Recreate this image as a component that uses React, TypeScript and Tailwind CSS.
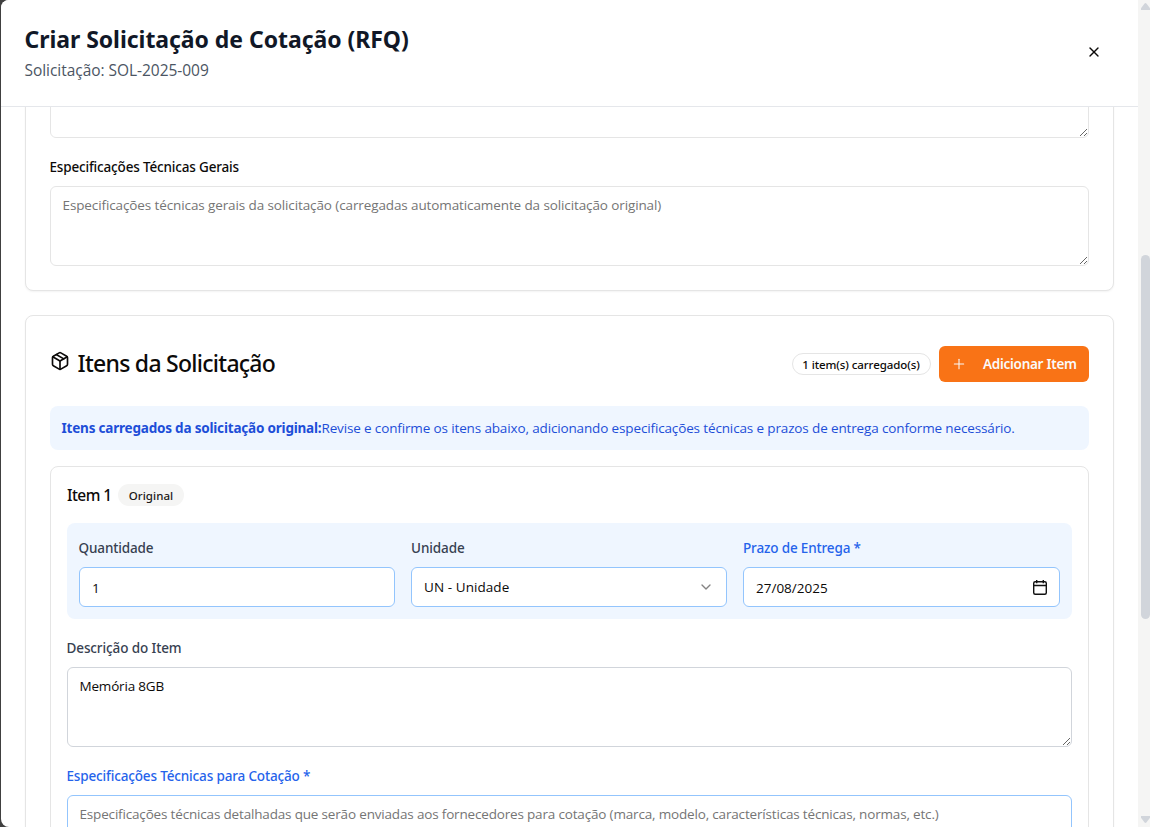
import { ReactNode } from "react";
import { ChevronDown, Package, Plus, X } from "lucide-react";

const TEXTAREA =
  "block h-20 w-full resize rounded-md border bg-white py-2 pr-3 pl-[11.5px] font-['Open_Sans',sans-serif] text-[13.5px] leading-5 text-[#0c0a09] placeholder:text-[#757575] outline-none";

function Label({ className, children }: { className: string; children: ReactNode }) {
  return <label className={`block text-[13.5px] leading-[14px] font-medium ${className}`}>{children}</label>;
}

function CalendarIcon() {
  return (
    <svg className="-mr-px" width="16" height="17" viewBox="0 0 16 17" fill="none" stroke="#111" strokeWidth="1.4">
      <rect x="1.7" y="2.7" width="12.6" height="12.6" rx="1.5" />
      <path d="M1.7 6.5h12.6M4.7 1v3.2M11.3 1v3.2" />
    </svg>
  );
}

function Header() {
  return (
    <header className="flex h-[107px] shrink-0 items-start justify-between border-b border-[#e5e7eb] bg-white px-6 pt-[23px]">
      <div className="-ml-[0.5px]">
        <h1 className="text-[23px] leading-8 font-bold tracking-[-0.05px] text-[#111827]">
          Criar Solicitação de Cotação (RFQ)
        </h1>
        <p className="mt-[3px] font-['Open_Sans',sans-serif] text-[15.5px] leading-6 tracking-[-0.04px] text-[#4b5563]">
          Solicitação: SOL-2025-009
        </p>
      </div>
      <button className="mt-[11px] flex h-9 w-10 items-center justify-center text-[#0c0a09]" aria-label="Fechar">
        <X size={16} />
      </button>
    </header>
  );
}

function GeneralSpecs() {
  return (
    <section className="-mt-[50px] h-[234px] shrink-0 rounded-lg border border-[#e5e5e5] bg-white px-6 shadow-xs">
      <div className="h-20">
        <textarea className={`${TEXTAREA} border-[#e5e5e5]`} />
      </div>
      <Label className="mt-[22px] mb-3 -ml-[0.5px] tracking-[-0.167px] text-[#0c0a09]">Especificações Técnicas Gerais</Label>
      <textarea
        className={`${TEXTAREA} border-[#e5e5e5] tracking-[-0.11px]`}
        placeholder="Especificações técnicas gerais da solicitação (carregadas automaticamente da solicitação original)"
      />
    </section>
  );
}

function ItemCard() {
  return (
    <div className="mt-4 rounded-lg border border-[#e5e5e5] p-4 pb-10">
      <div className="mt-px flex h-[22px] items-center gap-2">
        <h4 className="w-[43px] text-[15.5px] leading-6 font-medium tracking-[-0.55px] whitespace-nowrap text-[#0c0a09]">Item 1</h4>
        <span className="flex h-[22px] w-[66px] items-center justify-center rounded-full bg-[#f5f5f4] pt-px text-[11.5px] font-medium tracking-[0.05px] text-[#1c1917]">
          Original
        </span>
      </div>

      <div className="mt-[17px] grid h-24 grid-cols-[316px_316px_1fr] gap-4 rounded-lg bg-[#eff6ff] px-3 pt-[18px]">
        <div>
          <Label className="mb-3 -ml-[0.5px] tracking-[-0.13px] text-[#374151]">Quantidade</Label>
          <input
            className="block h-10 w-full rounded-md border border-[#93c5fd] bg-white px-3 pt-0.5 font-['Open_Sans',sans-serif] text-[13.5px] text-[#0c0a09] outline-none"
            defaultValue="1"
          />
        </div>
        <div>
          <Label className="mb-3 tracking-[-0.08px] text-[#374151]">Unidade</Label>
          <button className="flex h-10 w-full items-center justify-between rounded-md border border-[#93c5fd] bg-white px-3 font-['Open_Sans',sans-serif] text-[13.5px] tracking-[0.07px] text-[#0c0a09]">
            UN - Unidade
            <ChevronDown size={16} className="opacity-50" />
          </button>
        </div>
        <div>
          <Label className="mb-3 tracking-[-0.15px] text-[#2563eb]">Prazo de Entrega *</Label>
          <div className="flex h-10 w-full items-center justify-between rounded-md border border-[#93c5fd] bg-white px-3 font-['Open_Sans',sans-serif] text-[13.5px] text-[#0c0a09]">
            <span className="pt-0.5">27/08/2025</span>
            <CalendarIcon />
          </div>
        </div>
      </div>

      <Label className="mt-[22px] mb-3 -ml-[0.5px] tracking-[-0.11px] text-[#374151]">Descrição do Item</Label>
      <textarea className={`${TEXTAREA} border-[#d1d5db] tracking-[-0.18px]`} defaultValue="Memória 8GB" />

      <Label className="mt-[22px] mb-3 -ml-[0.5px] tracking-[-0.15px] text-[#2563eb]">Especificações Técnicas para Cotação *</Label>
      <textarea
        className={`${TEXTAREA} border-[#93c5fd] tracking-[-0.172px]`}
        placeholder="Especificações técnicas detalhadas que serão enviadas aos fornecedores para cotação (marca, modelo, características técnicas, normas, etc.)"
      />
    </div>
  );
}

function RequestItems() {
  return (
    <section className="mt-6 shrink-0 rounded-lg border border-[#e5e5e5] bg-white px-6 pt-[30px] pb-6 shadow-xs">
      <div className="flex h-9 items-center justify-between">
        <div className="flex items-center gap-2 pb-1.5">
          <Package size={20} className="text-[#0c0a09]" />
          <h3 className="-mb-1 -ml-[0.5px] text-[23px] leading-6 font-medium tracking-[-0.73px] text-[#0c0a09]">Itens da Solicitação</h3>
        </div>
        <div className="flex items-center gap-2">
          <span className="flex h-[22px] w-[139px] items-center justify-center rounded-full border border-[#e5e5e5] pt-px pr-px text-[11.5px] font-medium tracking-[-0.08px] text-[#0c0a09]">
            1 item(s) carregado(s)
          </span>
          <button className="flex h-9 w-[150px] items-center gap-4 rounded-md bg-[#f97316] px-3 text-[13.5px] font-semibold tracking-[-0.27px] whitespace-nowrap text-[#fafaf9]">
            <Plus size={16} strokeWidth={1.6} className="shrink-0" />
            Adicionar Item
          </button>
        </div>
      </div>

      <p className="mt-6 flex h-11 items-center rounded-lg bg-[#eff6ff] px-[11.5px] font-['Open_Sans',sans-serif] text-[13.5px] tracking-[-0.138px] whitespace-nowrap text-[#1d4ed8]">
        <strong className="font-['Noto_Sans',sans-serif] font-bold tracking-[-0.2px]">Itens carregados da solicitação original:</strong>
        Revise e confirme os itens abaixo, adicionando especificações técnicas e prazos de entrega conforme necessário.
      </p>

      <ItemCard />
    </section>
  );
}

function ScrollTrack() {
  return (
    <div className="flex w-3 shrink-0 flex-col items-end bg-[#f5f5f4]">
      <svg className="mt-[3px] h-[7px] w-[9px] shrink-0" viewBox="0 0 9 7" fill="#d1d5db">
        <path d="M3.6 .5Q4.5-.4 5.4.5L9 5.2V7H0V5.2Z" />
      </svg>
      <div className="mt-[245px] h-[364px] w-[9px] shrink-0 rounded-full bg-[#d1d5db]" />
      <svg className="mt-auto mb-[4px] h-[7px] w-[9px] shrink-0" viewBox="0 0 9 7" fill="#d1d5db">
        <path d="M3.6 6.5Q4.5 7.4 5.4 6.5L9 1.8V0H0V1.8Z" />
      </svg>
    </div>
  );
}

export default function App() {
  return (
    <div className="flex h-[827px] w-[1150px] overflow-hidden bg-[#404040] pl-px font-['Noto_Sans',sans-serif]">
      <div className="flex min-w-0 flex-1 bg-[linear-gradient(to_right,#404040_50%,#f5f5f4_50%)]">
        <main className="flex min-w-0 flex-1 flex-col overflow-hidden rounded-l-lg bg-white">
          <Header />
          <div className="flex min-h-0 flex-1 flex-col overflow-hidden px-6">
            <GeneralSpecs />
            <RequestItems />
          </div>
        </main>
        <ScrollTrack />
      </div>
    </div>
  );
}
